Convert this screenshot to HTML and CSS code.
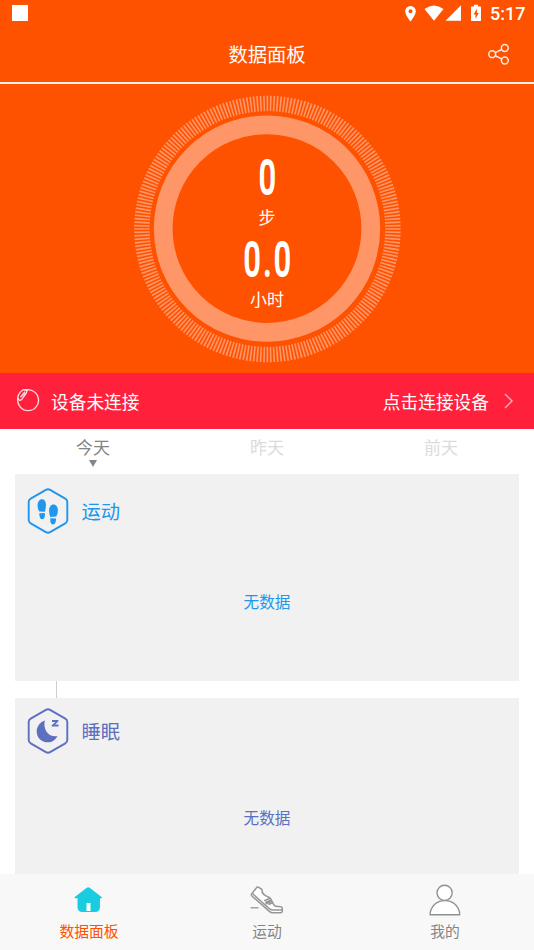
FILE: index.html
```html
<!DOCTYPE html>
<html lang="zh-CN">
<head>
<meta charset="utf-8">
<title>数据面板</title>
<link rel="stylesheet" href="styles.css">
</head>
<body>
<div class="app">
  <div class="status">
    <span class="notice"></span>
    <svg class="status-icons" width="78" height="26" viewBox="0 0 78 26" fill="#fff">
      <path fill-rule="evenodd" d="M6.500 6A5.300 5.300 0 0 0 1.200 11.300C1.200 15.300 6.500 21.500 6.500 21.500S11.800 15.300 11.800 11.300A5.300 5.300 0 0 0 6.500 6ZM6.500 9.300a2 2 0 1 1 0 4 2 2 0 0 1 0-4Z"/>
      <path d="M20.500 9Q30 1.800 39.500 9L30 20.800Z"/>
      <path d="M57 5.300V20.800H41.500Z"/>
      <path fill-rule="evenodd" d="M70 4.700h4v1.800h2.200q.8 0 .8.800v13q0 .8-.8.800h-8.400q-.8 0-.8-.8v-13q0-.8.800-.8h2.200ZM72.900 8.700L69.500 14.500h2v4.200L74.800 13h-1.900Z"/>
    </svg>
    <span class="clock">5:17</span>
  </div>
  <header class="titlebar">
    <h1>数据面板</h1>
    <svg class="share" width="22" height="22" viewBox="0 0 22 22" fill="none" stroke="#fff" stroke-opacity=".88" stroke-width="1.500">
      <circle cx="4.200" cy="11.200" r="3.400"/><circle cx="16.800" cy="5" r="3.400"/><circle cx="16.800" cy="17.500" r="3.400"/>
      <path d="M7.200 9.600L13.700 6.500M7.200 12.800L13.700 15.900"/>
    </svg>
  </header>
  <section class="hero">
    <svg class="dial" width="268" height="268" viewBox="0 0 268 268" fill="none" stroke="#ff9668">
      <circle cx="134.400" cy="134" r="125.500" stroke-width="15.500" pathLength="480" stroke-dasharray="1 1" stroke-dashoffset=".5"/>
      <circle cx="134" cy="133.600" r="103.800" stroke-width="18.800"/>
    </svg>
    <div class="readout">
      <div class="number">0</div>
      <div class="unit">步</div>
      <div class="number decimal">0.0</div>
      <div class="unit">小时</div>
    </div>
  </section>
  <div class="device">
    <svg width="24" height="24" viewBox="0 0 24 24" fill="none" stroke="#fff" stroke-opacity=".82" stroke-width="1.400">
      <path d="M8.500 1.500A10.400 10.400 0 1 1 2 8.900"/>
      <path d="M2 9.800Q1.400 6.300 4.300 3.100T9.800 .9Q11.800 1.600 10.100 4.300L5.800 10.400Q3.400 12.500 2 9.800ZM4.500 8.300L9 2.800M7.100 8.100L9.500 4.500"/>
    </svg>
    <span class="device-state">设备未连接</span>
    <span class="device-action">点击连接设备</span>
    <svg class="chevron" width="10" height="16" viewBox="0 0 10 16" fill="none" stroke="#fff" stroke-opacity=".6" stroke-width="1.500"><path d="M1 1L8 8L1 15"/></svg>
  </div>
  <nav class="days">
    <div class="day active">今天<i class="marker"></i></div>
    <div class="day">昨天</div>
    <div class="day">前天</div>
  </nav>
  <main class="cards">
    <section class="card sport">
      <div class="card-head">
        <svg width="42" height="46" viewBox="0 0 42 46" fill="#2196ed">
          <path d="M18.900 1.900Q21 .7 23.100 1.900L38.300 10.600Q40.300 11.800 40.300 14V32Q40.300 34.200 38.300 35.400L23.100 44.100Q21 45.300 18.900 44.100L3.700 35.400Q1.700 34.200 1.700 32V14Q1.700 11.800 3.700 10.600Z" fill="none" stroke="#2196ed" stroke-width="1.900"/>
          <path d="M15 11.300C17.900 11.300 19.200 14.600 18.900 18.100Q18.700 21 17.900 23.700L12.200 23.400Q10.400 20.500 10.600 17.100C10.800 13.700 12.400 11.300 15 11.300ZM12.200 25.200L17.800 24.900Q18.500 31.200 15 31.300Q12.600 31.300 12.200 25.200Z"/>
          <path d="M26.400 16.500C29.300 16.500 30.900 19.200 30.900 22.400Q30.900 25.600 29.200 28.600L23.300 28.900Q22.200 26 22.100 23.500C21.900 19.700 23.500 16.500 26.400 16.500ZM23.300 30.200L29.100 30.500Q28.900 36.400 26.200 36.400Q22.800 36.200 23.300 30.200Z"/>
        </svg>
        <h2>运动</h2>
      </div>
      <p class="empty">无数据</p>
    </section>
    <div class="connector"></div>
    <section class="card sleep">
      <div class="card-head">
        <svg width="42" height="46" viewBox="0 0 42 46" fill="#5c6fc0">
          <path d="M18.900 1.900Q21 .7 23.100 1.900L38.300 10.600Q40.300 11.800 40.300 14V32Q40.300 34.200 38.300 35.400L23.100 44.100Q21 45.300 18.900 44.100L3.700 35.400Q1.700 34.200 1.700 32V14Q1.700 11.800 3.700 10.600Z" fill="none" stroke="#5c6fc0" stroke-width="1.900"/>
          <path d="M17.900 12.500C15.800 20.500 20.500 29.500 30.500 28.200C28.500 32 24.900 34.300 20.800 34.300C14.600 34.300 9.700 29.500 9.700 23.400C9.700 18.500 13.200 13.800 17.900 12.500Z"/>
          <path d="M25 12H31.400V13.500L27.900 16.500H31.500V18.600H24.700V17.200L28.300 14.100H25Z"/>
        </svg>
        <h2>睡眠</h2>
      </div>
      <p class="empty">无数据</p>
    </section>
  </main>
  <footer class="tabs">
    <div class="tab current">
      <svg width="36" height="36" viewBox="0 0 36 36"><path d="M3.200 15.500L15.700 5.700Q17.200 4.800 18.700 5.700L31.200 15.500L29.900 16.500L29 16V25Q29 30 23.900 30H11.500Q6.500 30 6.500 25V16L4.700 16.600Z" fill="#19ccdf"/><path d="M15.500 21h4v8h-4Z" fill="#fff"/></svg>
      <span>数据面板</span>
    </div>
    <div class="tab">
      <svg width="36" height="36" viewBox="0 0 36 36" fill="none" stroke="#969696" stroke-width="1.500" stroke-linejoin="round">
        <path d="M7.500 5.700Q8.500 4.300 9.800 5.400C12 7.300 13.400 6.500 13.100 8.700Q13 11.800 16.500 13.700L21.200 16L23.500 20Q24.500 24.500 28.500 24.500Q33.600 24.200 33.300 26.900V29.500Q33 30.700 31.500 30.700H23.600Q21.700 30.700 20.300 29.400L2.900 14Q1.800 12.700 3 11.500L7.500 5.700Z" fill="#fff"/>
        <path d="M3.200 11.300L20.200 26.600Q21.400 27.900 23.500 27.900H33M15.200 18.700L21.300 16.200M17.300 20.500L22.700 18.500M19.400 22.500L23.900 20.700"/>
        <path d="M16.500 21.300L22.800 18.700" stroke-width="3"/><path d="M1.500 25.800H9.500" stroke-width="1.300"/>
      </svg>
      <span>运动</span>
    </div>
    <div class="tab">
      <svg width="36" height="36" viewBox="0 0 36 36" fill="#fff" stroke="#909090" stroke-width="1.350"><circle cx="17.600" cy="10.800" r="7.600"/><path d="M3.200 32.700V30.600C4.800 23 10.600 18.600 17.900 18.600S31 23 32.600 30.600V32.700Z"/></svg>
      <span>我的</span>
    </div>
  </footer>
</div>
</body>
</html>
```

FILE: styles.css
```css
* { box-sizing: border-box; }
body {
  margin: 0;
  background: #fff;
  font-family: "Noto Sans CJK SC", sans-serif;
}
h1, h2, p { margin: 0; font-weight: 400; }
svg { display: block; flex: none; }
.app {
  width: 534px;
  height: 950px;
  overflow: hidden;
  display: flex;
  flex-direction: column;
}
.app > * { flex: none; }
.status {
  height: 26px;
  background: #ff5200;
  color: #fff;
  display: flex;
  align-items: center;
  padding: 0 9px 0 12px;
}
.notice { width: 16px; height: 16px; background: #fff; }
.status-icons { margin-left: auto; }
.clock {
  width: 35px;
  margin-left: 8px;
  font: 500 18px/26px Roboto, sans-serif;
  padding-top: 2px;
  white-space: nowrap;
}
.titlebar {
  height: 58px;
  background: #ff5200;
  border-bottom: 2px solid #fff0e8;
  color: #fff;
  display: grid;
  grid-template-columns: 1fr auto 1fr;
  align-items: center;
}
.titlebar h1 {
  grid-column: 2;
  font-size: 19.300px;
  line-height: 28px;
}
.share { justify-self: end; margin-right: 24px; }
.hero {
  height: 289px;
  background: #ff5200;
  color: #fff;
  display: grid;
  justify-items: center;
  padding-top: 11px;
}
.dial, .readout { grid-area: 1 / 1; }
.readout {
  padding-top: 60px;
  text-align: center;
}
.number {
  height: 44px;
  font: 400 48px/46px Roboto, sans-serif;
  -webkit-text-stroke: 2.200px #fff;
  transform: scaleX(.62);
}
.decimal { letter-spacing: 4.500px; padding-left: 4.500px; }
.unit { height: 38px; font-size: 17px; line-height: 36px; }
.device {
  height: 56px;
  background: #ff203b;
  color: #fff;
  display: flex;
  align-items: center;
  padding: 0 20px 0 16px;
  font-size: 17.700px;
}
.device-state { margin-left: 11px; }
.device-action { margin-left: auto; }
.chevron { margin-left: 15px; }
.days {
  height: 45px;
  display: grid;
  grid-template-columns: repeat(3, 174px);
  justify-content: center;
}
.day {
  color: #dbdbdb;
  font-size: 17px;
  line-height: 36px;
  text-align: center;
}
.active { color: #858585; }
.marker {
  display: block;
  width: 0;
  margin: -5px auto 0;
  border: 4.500px solid transparent;
  border-top: 7px solid #858585;
  border-bottom: 0;
}
.cards { height: 400px; padding: 0 15px; overflow: hidden; }
.card { background: #f1f1f1; }
.sport { height: 206.500px; color: #2196ed; padding-top: 13.500px; }
.sleep { height: 207px; color: #5c6fc0; padding-top: 10.500px; }
.card-head {
  height: 46px;
  display: flex;
  gap: 12.500px;
  padding-left: 12px;
  align-items: center;
}
.card h2 { font-size: 19.300px; line-height: 28px; }
.empty { font-size: 15.600px; line-height: 24px; text-align: center; }
.sport .empty { margin-top: 55.500px; }
.sleep .empty { margin-top: 51px; }
.connector {
  height: 17px;
  margin-left: 41px;
  border-left: 1px solid #cecece;
}
.tabs {
  height: 76px;
  background: #f8f8f8;
  display: grid;
  grid-template-columns: repeat(3, 178px);
  padding-top: 8px;
  font-size: 14.800px;
  line-height: 24px;
  color: #858585;
}
.tab { display: flex; flex-direction: column; align-items: center; gap: 1px; }
.current { color: #ff5200; }
```
